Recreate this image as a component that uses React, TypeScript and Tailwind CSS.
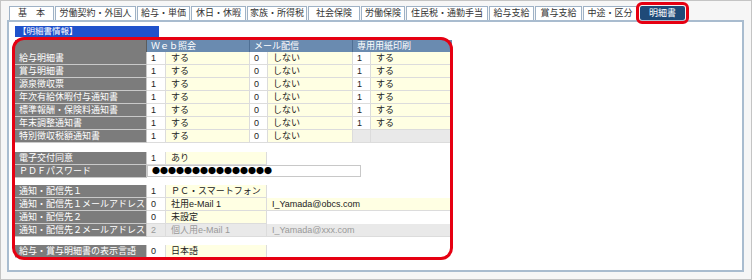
import React from 'react';

const FONT = '[font-family:"Liberation_Sans","Noto_Sans_CJK_JP",sans-serif]';

const tabs = [
  { label: '基　本', w: 'w-[45px]' },
  { label: '労働契約・外国人', w: 'w-[81px]' },
  { label: '給与・単価', w: 'w-[53px]' },
  { label: '休日・休暇', w: 'w-[55px]' },
  { label: '家族・所得税', w: 'w-[60px]' },
  { label: '社会保険', w: 'w-[52px]' },
  { label: '労働保険', w: 'w-[44px]' },
  { label: '住民税・通勤手当', w: 'w-[82px]' },
  { label: '給与支給', w: 'w-[45px]' },
  { label: '賞与支給', w: 'w-[47px]' },
  { label: '中途・区分', w: 'w-[54px]' },
];

type Cell = { w: string; text?: string; bg?: string; fg?: string; pl?: string };

function Label({ text }: { text: string }) {
  return (
    <div className="w-[132px] h-full bg-[#7c7c7c] text-white pl-[4px] border-b border-r border-[#c9c9c9] whitespace-nowrap">
      {text}
    </div>
  );
}

function Row({ label, cells }: { label: string; cells: Cell[] }) {
  return (
    <div className="flex h-[13px] leading-[12px]">
      <Label text={label} />
      {cells.map((c, i) => (
        <div
          key={i}
          className={`${c.w} h-full ${c.bg ?? 'bg-white'} ${c.fg ?? 'text-[#222]'} ${c.pl ?? 'pl-[4px]'} border-b border-r border-[#dcdcdc] whitespace-nowrap`}
        >
          {c.text}
        </div>
      ))}
    </div>
  );
}

const Y = 'bg-[#ffffe3]';
const G = 'bg-[#e9e9e9]';

const docs = ['給与明細書', '賞与明細書', '源泉徴収票', '年次有給休暇付与通知書', '標準報酬・保険料通知書', '年末調整通知書'];

function triple(last: boolean): Cell[] {
  return [
    { w: 'w-[19px]', text: '1' },
    { w: 'w-[84px]', text: 'する', bg: Y, pl: 'pl-[5px]' },
    { w: 'w-[18px]', text: '0' },
    { w: 'w-[85px]', text: 'しない', bg: Y, pl: 'pl-[5px]' },
    last ? { w: 'w-[18px]', bg: G } : { w: 'w-[18px]', text: '1' },
    last ? { w: 'w-[81px]', bg: G } : { w: 'w-[81px]', text: 'する', bg: Y, pl: 'pl-[5px]' },
  ];
}

export default function App() {
  return (
    <div className={`relative w-[752px] h-[280px] bg-[#f6f6f6] border border-[#c4c4c4] text-[9px] ${FONT}`}>
      {/* tabs */}
      <div className="flex gap-[1px] pl-[8px] pt-[5px] h-[19px]">
        {tabs.map((t) => (
          <div
            key={t.label}
            className={`${t.w} h-[14px] bg-white border border-b-0 border-[#9fb2c6] text-[#333] text-center leading-[13px] whitespace-nowrap`}
          >
            {t.label}
          </div>
        ))}
        <div className="w-[45px] h-[14px] ml-[2px] bg-[#1f4a78] text-white text-center leading-[14px] rounded-[2px] outline-[3px] outline-solid outline-[#e60012] outline-offset-[1px]">
          明細書
        </div>
      </div>

      {/* panel */}
      <div className="ml-[6px] w-[737px] h-[252px] bg-white border-2 border-[#a9bccf] pl-[6px] pt-[4px]">
        <div className="w-[144px] h-[11px] bg-[#1f52cc] text-white text-[8.5px] leading-[11px] pl-[3px]">【明細書情報】</div>

        <div className="mt-[3px]">
          {/* header */}
          <div className="flex h-[12px] leading-[12px] text-white">
            <div className="w-[132px] h-full bg-[#7c7c7c] border-r border-[#5c5c5c]" />
            <div className="w-[103px] h-full bg-[#6a8bb0] border-r border-[#4f6f94] pl-[4px]">Ｗｅｂ照会</div>
            <div className="w-[103px] h-full bg-[#6a8bb0] border-r border-[#4f6f94] pl-[4px]">メール配信</div>
            <div className="w-[99px] h-full bg-[#6a8bb0] pl-[4px]">専用用紙印刷</div>
          </div>
          {docs.map((d) => (
            <Row key={d} label={d} cells={triple(false)} />
          ))}
          <Row label="特別徴収税額通知書" cells={triple(true)} />

          <div className="mt-[9px]">
            <Row
              label="電子交付同意"
              cells={[
                { w: 'w-[19px]', text: '1' },
                { w: 'w-[101px]', text: 'あり', bg: Y, pl: 'pl-[5px]' },
              ]}
            />
            <div className="flex h-[13px] leading-[12px]">
              <Label text="ＰＤＦパスワード" />
              <div className="w-[214px] h-[12px] bg-white border border-[#c8c8c8] pl-[4px] text-[8px] leading-[10px] text-black whitespace-nowrap overflow-hidden [font-family:'Noto_Sans_CJK_JP',sans-serif]">
                ●●●●●●●●●●●●●●●
              </div>
            </div>
          </div>

          <div className="mt-[7px]">
            <Row
              label="通知・配信先１"
              cells={[
                { w: 'w-[19px]', text: '1' },
                { w: 'w-[101px]', text: 'ＰＣ・スマートフォン', bg: Y, pl: 'pl-[5px]' },
              ]}
            />
            <Row
              label="通知・配信先１メールアドレス"
              cells={[
                { w: 'w-[19px]', text: '0' },
                { w: 'w-[101px]', text: '社用e-Mail 1', bg: Y, pl: 'pl-[5px]' },
                { w: 'w-[186px]', text: 'I_Yamada@obcs.com', bg: Y, pl: 'pl-[5px]' },
              ]}
            />
            <Row
              label="通知・配信先２"
              cells={[
                { w: 'w-[19px]', text: '0' },
                { w: 'w-[101px]', text: '未設定', bg: Y, pl: 'pl-[5px]' },
              ]}
            />
            <Row
              label="通知・配信先２メールアドレス"
              cells={[
                { w: 'w-[19px]', text: '2', bg: G, fg: 'text-[#999]' },
                { w: 'w-[101px]', text: '個人用e-Mail 1', bg: G, fg: 'text-[#999]', pl: 'pl-[5px]' },
                { w: 'w-[186px]', text: 'I_Yamada@xxx.com', bg: G, fg: 'text-[#999]', pl: 'pl-[5px]' },
              ]}
            />
          </div>

          <div className="mt-[8px]">
            <Row
              label="給与・賞与明細書の表示言語"
              cells={[
                { w: 'w-[19px]', text: '0' },
                { w: 'w-[101px]', text: '日本語', bg: Y, pl: 'pl-[5px]' },
              ]}
            />
          </div>
        </div>
      </div>

      {/* red annotation frame */}
      <div className="absolute left-[11px] top-[36px] w-[441px] h-[223px] border-[3px] border-[#e60012] rounded-[12px] pointer-events-none" />
    </div>
  );
}
